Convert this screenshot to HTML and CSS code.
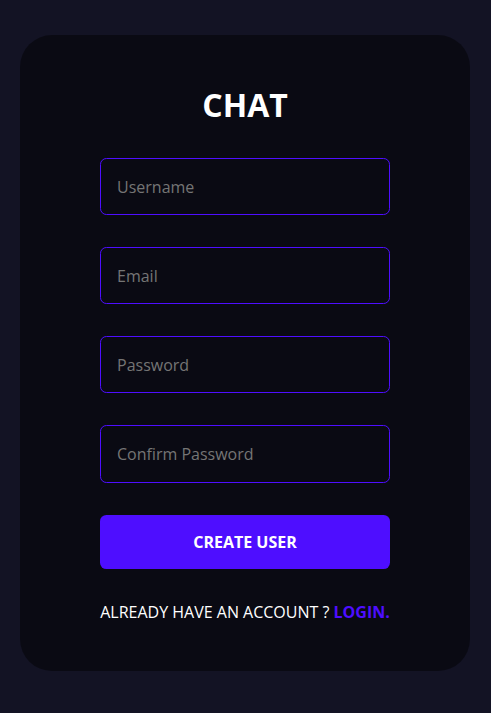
FILE: index.html
```html
<!DOCTYPE html>
<html lang="en">
<head>
<meta charset="utf-8">
<title>Chat - Register</title>
<link rel="stylesheet" href="styles.css">
</head>
<body>
<div class="page">
  <form class="card">
    <div class="brand"><h1>CHAT</h1></div>
    <input type="text" placeholder="Username" name="username">
    <input type="email" placeholder="Email" name="email">
    <input type="password" placeholder="Password" name="password">
    <input type="password" placeholder="Confirm Password" name="confirmPassword">
    <button type="button">Create User</button>
    <span class="alt">Already have an account ? <a href="#">Login.</a></span>
  </form>
</div>
</body>
</html>
```
FILE: styles.css
```css
* { margin: 0; padding: 0; box-sizing: border-box; }
html, body { height: 100%; }
body {
  background: #131324;
  font-family: "Open Sans", "Noto Sans", sans-serif;
}
.page {
  height: 100vh;
  display: flex;
  flex-direction: column;
  justify-content: center;
  align-items: center;
  padding: 0 1px 8px 0;
}
.card {
  width: 450px;
  display: flex;
  flex-direction: column;
  gap: 2rem;
  background: rgba(0, 0, 0, 0.46);
  border-radius: 2rem;
  padding: 3rem 5rem;
}
.brand {
  display: flex;
  justify-content: center;
  align-items: center;
}
.brand h1 {
  color: #fff;
  font-size: 2rem;
  font-weight: 700;
  text-transform: uppercase;
}
.card input {
  width: 100%;
  height: 57.25px;
  background: transparent;
  padding: 1px 1rem 0;
  border: 0.1rem solid #4e0eff;
  border-radius: 0.4rem;
  color: #fff;
  font-family: inherit;
  font-size: 1rem;
  outline: none;
}
.card input::placeholder { color: #757575; }
.card button {
  background: #4e0eff;
  color: #fff;
  padding: 1rem 2rem;
  border: none;
  font-family: inherit;
  font-weight: 700;
  font-size: 1rem;
  border-radius: 0.4rem;
  text-transform: uppercase;
  cursor: pointer;
}
.alt {
  color: #fff;
  font-size: 1rem;
  text-transform: uppercase;
  text-align: center;
}
.alt a {
  color: #4e0eff;
  text-decoration: none;
  font-weight: 700;
}
```
